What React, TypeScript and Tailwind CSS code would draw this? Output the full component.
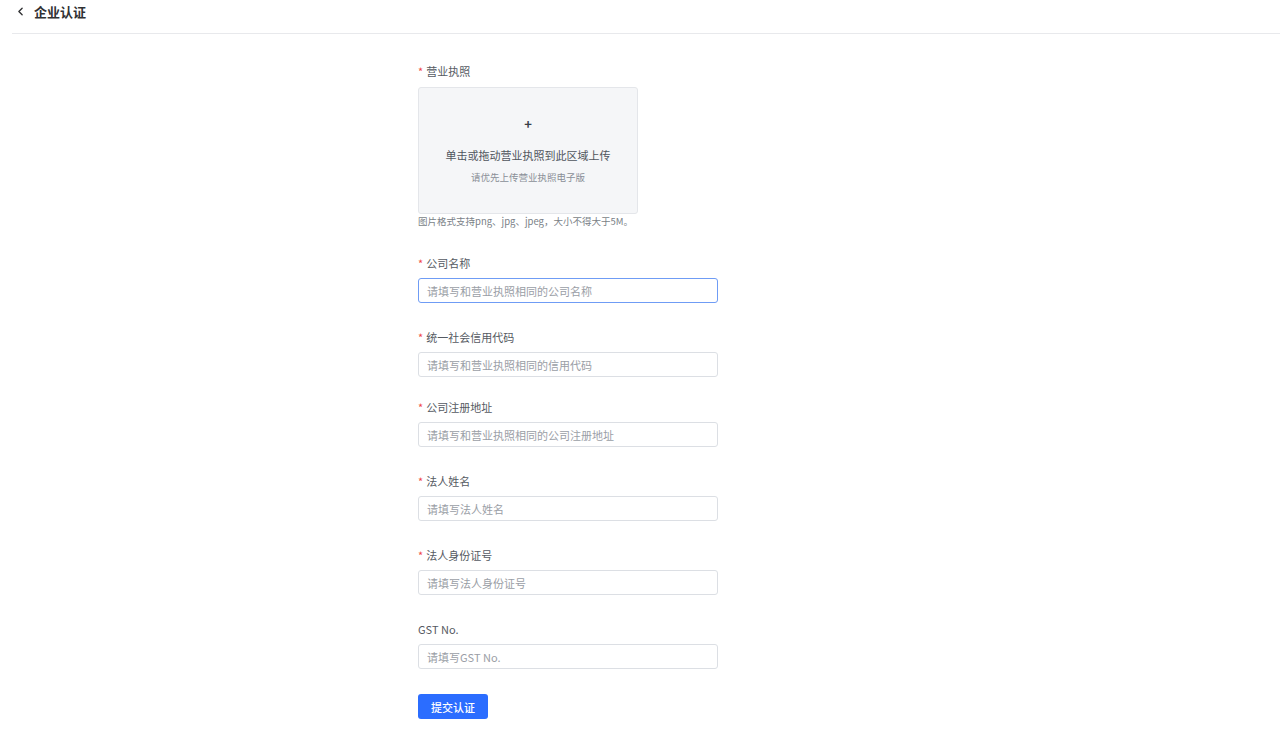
import { ChevronLeft } from "lucide-react";

type Field = {
  label: string;
  placeholder: string;
  required?: boolean;
  focused?: boolean;
  gap: string;
};

const fields: Field[] = [
  { label: "公司名称", placeholder: "请填写和营业执照相同的公司名称", required: true, focused: true, gap: "mt-[23px]" },
  { label: "统一社会信用代码", placeholder: "请填写和营业执照相同的信用代码", required: true, gap: "mt-[22px]" },
  { label: "公司注册地址", placeholder: "请填写和营业执照相同的公司注册地址", required: true, gap: "mt-[18px]" },
  { label: "法人姓名", placeholder: "请填写法人姓名", required: true, gap: "mt-[22px]" },
  { label: "法人身份证号", placeholder: "请填写法人身份证号", required: true, gap: "mt-[22px]" },
  { label: "GST No.", placeholder: "请填写GST No.", gap: "mt-[22px]" },
];

function Label({ text, required }: { text: string; required?: boolean }) {
  return (
    <div className="flex h-[24px] items-center text-[11px] text-[#555a62]">
      {required && <span className="mr-[3px] text-[#f04848]">*</span>}
      {text}
    </div>
  );
}

export default function App() {
  return (
    <div
      className="min-h-[730px] bg-white"
      style={{ fontFamily: '"Noto Sans CJK SC", "Noto Sans", sans-serif' }}
    >
      <div className="ml-[12px] flex h-[34px] items-center border-b border-[#e8e9ec] pb-[10px]">
        <ChevronLeft size={13} strokeWidth={2.5} className="ml-[2px] text-[#303133]" />
        <span className="ml-[7px] text-[13px] font-bold text-[#303133]">企业认证</span>
      </div>

      <div className="ml-[418px] w-[300px] pt-[25px]">
        <Label text="营业执照" required />
        <div className="mt-[4px] flex h-[127px] w-[220px] flex-col items-center rounded-[3px] border border-[#e4e6ea] bg-[#f5f6f8]">
          <div className="mt-[29px] text-[13px] leading-none font-bold text-[#3a3f47]">+</div>
          <div className="mt-[17px] text-[11px] font-normal text-[#50555d]">单击或拖动营业执照到此区域上传</div>
          <div className="mt-[6px] text-[9.5px] text-[#8a8f97]">请优先上传营业执照电子版</div>
        </div>
        <div className="text-[9.5px] text-[#7a7f87]">图片格式支持png、jpg、jpeg，大小不得大于5M。</div>

        {fields.map((f) => (
          <div key={f.label} className={f.gap}>
            <Label text={f.label} required={f.required} />
            <div
              className={
                f.focused
                  ? "mt-[3px] flex h-[25px] items-center rounded-[3px] border border-[#6f9cf5] px-[8px] text-[11px] text-[#9a9ea6]"
                  : "mt-[3px] flex h-[25px] items-center rounded-[3px] border border-[#dcdfe4] px-[8px] text-[11px] text-[#9a9ea6]"
              }
            >
              {f.placeholder}
            </div>
          </div>
        ))}

        <button className="mt-[25px] flex h-[25px] w-[70px] items-center justify-center rounded-[3px] bg-[#2b6dff] text-[11px] font-medium text-white">
          提交认证
        </button>
      </div>
    </div>
  );
}
